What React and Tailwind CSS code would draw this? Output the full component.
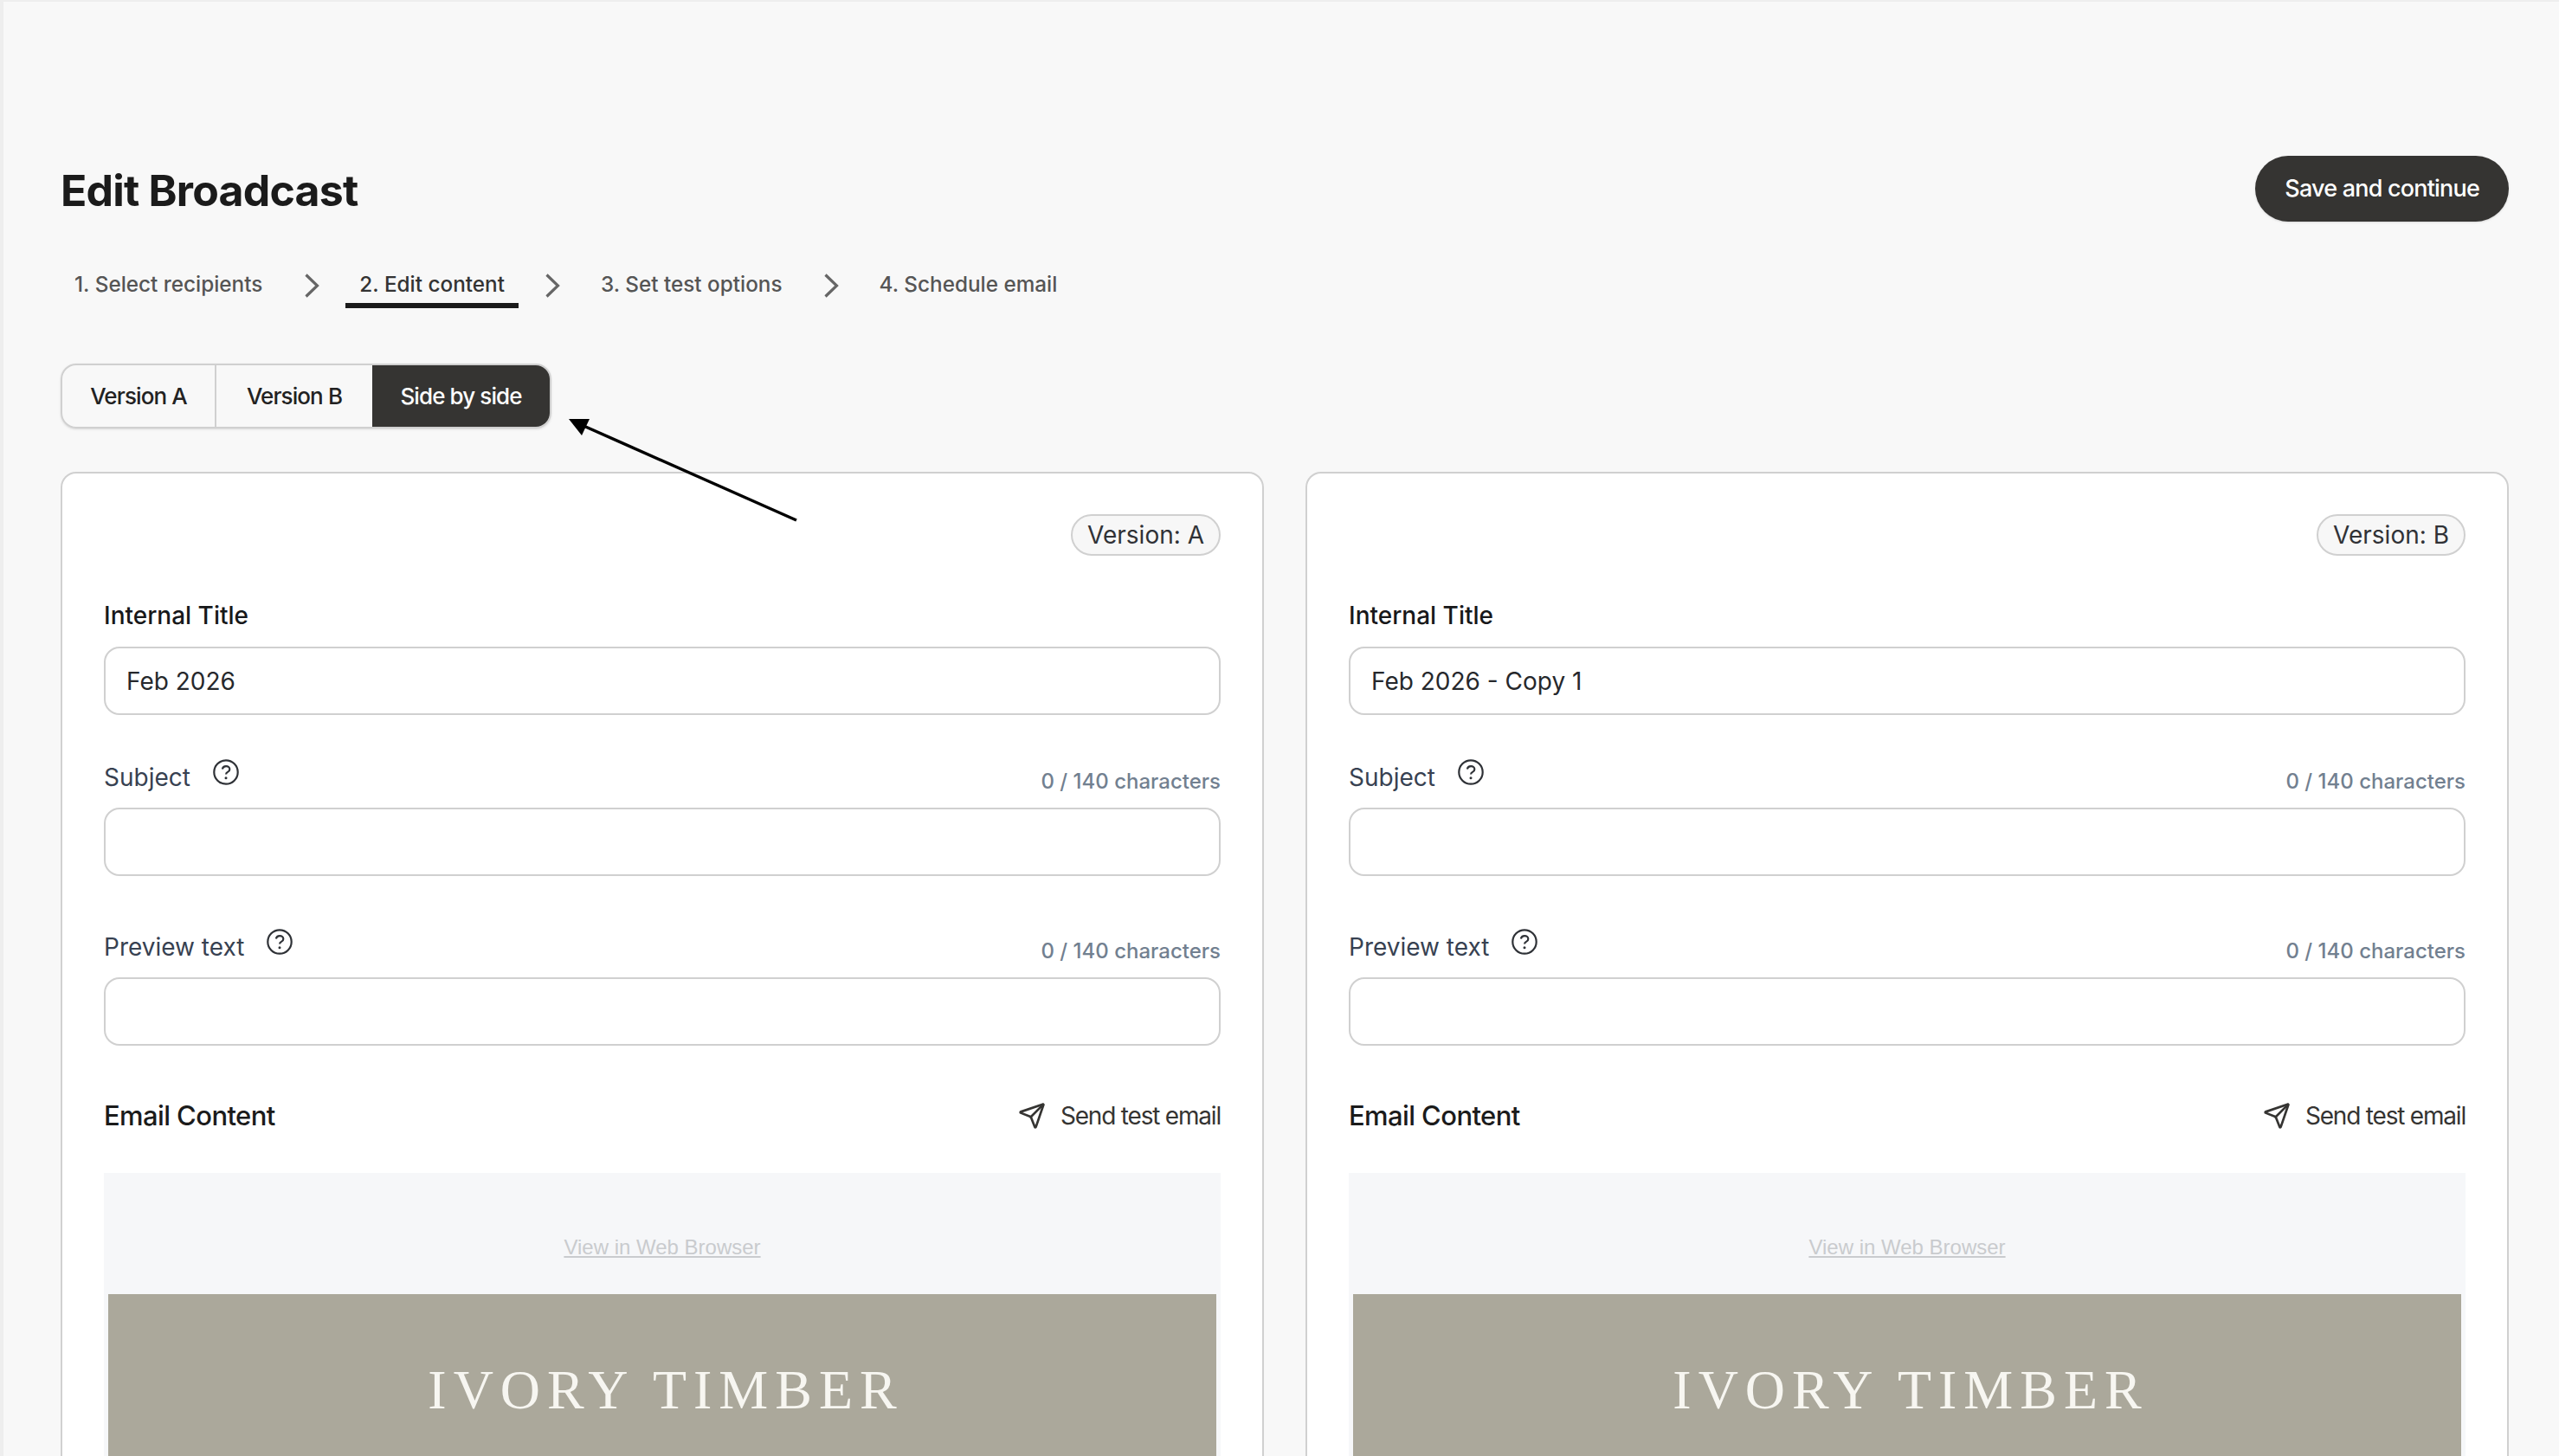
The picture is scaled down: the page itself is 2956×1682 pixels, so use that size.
import React from 'react';
import { Send } from 'lucide-react';

function ChevronIcon() {
  return (
    <svg width="18" height="28" viewBox="0 0 18 28" fill="none" className="shrink-0 mt-[8px]">
      <path d="M2.5 1.5 L15.5 14 L2.5 26.5" stroke="#666" strokeWidth="3.2" />
    </svg>
  );
}

function HelpIcon() {
  return (
    <svg width="30" height="30" viewBox="0 0 30 30" fill="none" className="shrink-0">
      <circle cx="15" cy="15" r="13.7" stroke="#2f3237" strokeWidth="2.2" />
      <path d="M10.8 11.6c.5-2.2 2.2-3.4 4.3-3.4 2.4 0 4.2 1.5 4.2 3.5 0 1.6-1 2.5-2.3 3.2-1.2.7-1.9 1.4-1.9 2.6" stroke="#2f3237" strokeWidth="2.2" />
      <circle cx="15" cy="21.8" r="1.5" fill="#2f3237" />
    </svg>
  );
}

function TextBox({ value }) {
  return (
    <div className="h-[79px] rounded-[18px] border-2 border-[#d0d0d0] bg-white px-[24px] flex items-center text-[28px] text-[#26282c]">
      {value}
    </div>
  );
}

function CountedField({ label, gap }) {
  return (
    <div className={gap}>
      <div className="flex justify-between items-end h-[36px] mb-[17px]">
        <div className="flex items-start">
          <span className="-mt-[2px] text-[28px] leading-[36px] text-[#374151]">{label}</span>
          <span className="ml-[26px] -mt-[5px]"><HelpIcon /></span>
        </div>
        <span className="text-[24px] leading-[28px] font-medium text-[#728090] -mb-[1px]">0 / 140 characters</span>
      </div>
      <TextBox value="" />
    </div>
  );
}

function VersionCard({ version, title }) {
  return (
    <div className="flex-1 h-[1300px] rounded-[18px] border-2 border-[#d0d0d0] bg-white pt-[47px] px-[48px]">
      <div className="flex justify-end">
        <span className="h-[48px] px-[17px] rounded-full border-2 border-[#d0d0d0] bg-[#f7f7f7] flex items-center text-[28px] text-[#303236]">
          Version: {version}
        </span>
      </div>
      <div className="mt-[51px] mb-[18px] text-[28px] leading-[36px] font-medium text-[#17181a]">Internal Title</div>
      <TextBox value={title} />
      <CountedField label="Subject" gap="mt-[54px]" />
      <CountedField label="Preview text" gap="mt-[64px]" />
      <div className="flex justify-between items-center mt-[61px] h-[40px]">
        <span className="text-[31px] font-medium text-[#1b1b1b] tracking-[-0.6px]">Email Content</span>
        <span className="flex items-center gap-[17px] text-[28px] text-[#353432] tracking-[-1.2px]">
          <Send size={32} strokeWidth={2} />
          Send test email
        </span>
      </div>
      <div className="mt-[46px] bg-[#f6f7f9] h-[600px] px-[5px]">
        <div className="h-[140px] flex items-center justify-center pt-[32px]">
          <span className="font-['Liberation_Sans',sans-serif] text-[24px] text-[#c9cbce] underline">View in Web Browser</span>
        </div>
        <div className="h-[460px] bg-[#aba89b] flex justify-center pt-[78px] pl-[8px]">
          <span className="font-['Liberation_Serif',serif] text-[64px] leading-[66px] tracking-[8px] text-[#f7f6f1]">IVORY TIMBER</span>
        </div>
      </div>
    </div>
  );
}

export default function App() {
  return (
    <div className="relative h-[1682px] w-[2956px] overflow-hidden bg-[#f8f8f8] border-t-2 border-l-4 border-[#eeeeee] font-['Inter',sans-serif]">
      <div className="pt-[178px] pl-[66px] pr-[58px]">
        <div className="flex justify-between items-center h-[76px]">
          <h1 className="pt-[4px] text-[50px] font-bold text-[#1b1b1b] tracking-[-0.8px]">Edit Broadcast</h1>
          <button className="h-[76px] px-[34px] rounded-full bg-[#353432] text-white text-[27px] font-medium tracking-[-0.8px] shadow-sm">
            Save and continue
          </button>
        </div>

        <div className="flex items-center mt-[40px] h-[60px] text-[24.3px] font-medium text-[#555555]">
          <span className="pl-[16px] pr-[48px] pt-[4px]">1. Select recipients</span>
          <ChevronIcon />
          <span className="ml-[30px] px-[16px] pt-[10px] h-[60px] flex items-center border-b-[6px] border-[#1b1b1b] text-[#333333]">2. Edit content</span>
          <span className="ml-[30px]"><ChevronIcon /></span>
          <span className="ml-[47px] mr-[47px] pt-[4px]">3. Set test options</span>
          <ChevronIcon />
          <span className="ml-[47px] pt-[4px]">4. Schedule email</span>
        </div>

        <div className="flex mt-[64px] w-[567px] h-[75px] rounded-[18px] border-2 border-[#d0d0d0] overflow-hidden text-[26px] font-medium tracking-[-0.9px] shadow-sm">
          <div className="w-[178px] flex items-center justify-center border-r-2 border-[#d0d0d0] text-[#222]">Version A</div>
          <div className="w-[180px] flex items-center justify-center text-[#222]">Version B</div>
          <div className="flex-1 flex items-center justify-center bg-[#353432] text-white">Side by side</div>
        </div>

        <div className="flex gap-[48px] mt-[50px]">
          <VersionCard version="A" title="Feb 2026" />
          <VersionCard version="B" title="Feb 2026 - Copy 1" />
        </div>
      </div>

      {/* annotation arrow over the tabs */}
      <svg className="absolute left-[-4px] top-[-2px]" width="1000" height="640" viewBox="0 0 1000 640" fill="none">
        <path d="M920 601 L672 491" stroke="#000" strokeWidth="3.5" />
        <path d="M657 484 L681 484 L672 503 Z" fill="#000" />
      </svg>
    </div>
  );
}
